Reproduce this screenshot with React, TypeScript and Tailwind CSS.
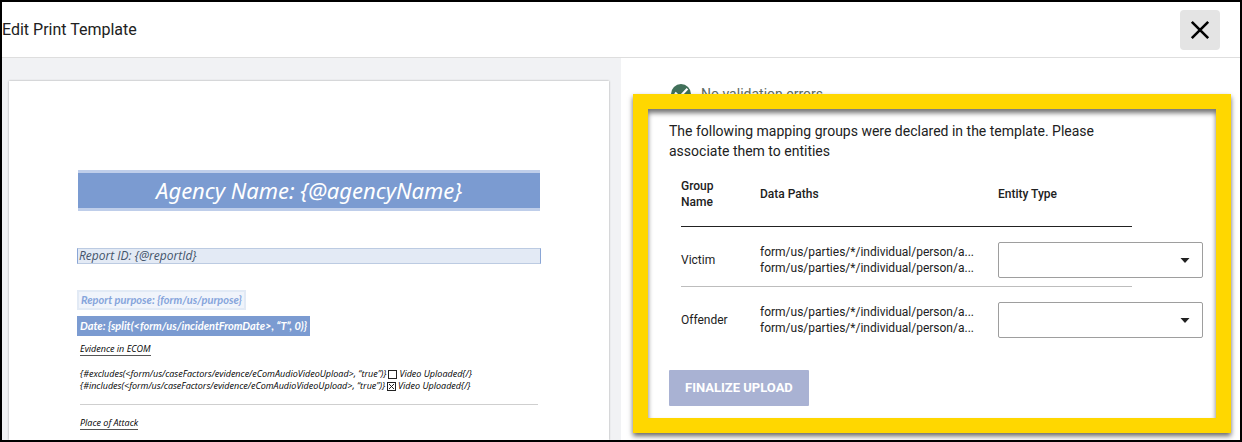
import React from "react";

type MappingGroup = {
  name: string;
  paths: string[];
};

const groups: MappingGroup[] = [
  {
    name: "Victim",
    paths: [
      "form/us/parties/*/individual/person/a...",
      "form/us/parties/*/individual/person/a...",
    ],
  },
  {
    name: "Offender",
    paths: [
      "form/us/parties/*/individual/person/a...",
      "form/us/parties/*/individual/person/a...",
    ],
  },
];

function Header() {
  return (
    <header className="flex items-center justify-between border-b border-[#dedede] pt-2 pr-5 pb-[7px]">
      <h1 className="text-base text-[#212121]">Edit Print Template</h1>
      <button
        type="button"
        aria-label="Close"
        className="flex size-10 items-center justify-center rounded bg-[#e4e4e4]"
      >
        <svg viewBox="0 0 20 20" className="size-5" fill="none" stroke="#000" strokeWidth="2.6">
          <path d="M1.8 1.8 18.2 18.2M18.2 1.8 1.8 18.2" />
        </svg>
      </button>
    </header>
  );
}

function TemplateCheckbox({ condition, checked }: { condition: string; checked: boolean }) {
  return (
    <label className="flex items-center whitespace-nowrap">
      <span>{condition}</span>
      <span className="relative mx-[2px] flex size-[9px]">
        <input
          type="checkbox"
          defaultChecked={checked}
          className="size-[9px] appearance-none border border-[#222] bg-white"
        />
        {checked && (
          <svg viewBox="0 0 9 9" className="pointer-events-none absolute inset-0 size-[9px]" stroke="#222">
            <path d="M2 2 7 7M7 2 2 7" />
          </svg>
        )}
      </span>
      <span>{"Video Uploaded{/}"}</span>
    </label>
  );
}

function TemplatePreview() {
  return (
    <section
      aria-label="Template preview"
      className="flex min-w-0 flex-col bg-[#f1f2f4] pt-[23px] pr-3 pl-[7px]"
    >
      <article className="flex-1 bg-white px-[69px] pt-[89px] font-['Open_Sans',sans-serif] text-black italic shadow-[0_0_2px_rgba(0,0,0,0.35)]">
        <h2 className="border-y-3 border-[#bfceea] bg-[#7b9bd1] text-center font-['Noto_Sans',sans-serif] text-[22px] leading-[35px] text-white">
          {"Agency Name: {@agencyName}"}
        </h2>
        <p className="-mx-px mt-[37px] border border-x-[#8aa6d6] border-y-[#bccbe2] bg-[#e3eaf5] px-px text-xs leading-[14px] font-medium text-[#44546a]">
          {"Report ID: {@reportId}"}
        </p>
        <p className="mt-[26px] -ml-px w-fit border-2 border-[#e2eaf5] bg-[#f0f4fb] px-[2px] font-['Lato',sans-serif] text-[11px] leading-4 font-bold text-[#86a5db]">
          {"Report purpose: {form/us/purpose}"}
        </p>
        <p className="mt-[6px] -ml-px w-fit bg-[#7b9bd1] px-[3px] font-['Lato',sans-serif] text-[11px] leading-5 font-bold text-white">
          {"Date: {split(<form/us/incidentFromDate>, “T”, 0)}"}
        </p>
        <div className="px-[2px] text-[9px] leading-3">
          <h3 className="mt-[7px] w-fit border-b border-[#555]">Evidence in ECOM</h3>
          <div className="mt-3">
            <TemplateCheckbox
              condition={"{#excludes(<form/us/caseFactors/evidence/eComAudioVideoUpload>, “true”)}"}
              checked={false}
            />
            <TemplateCheckbox
              condition={"{#includes(<form/us/caseFactors/evidence/eComAudioVideoUpload>, “true”)}"}
              checked
            />
          </div>
          <hr className="mt-3 border-[#cfcfcf]" />
          <h3 className="mt-3 w-fit border-b border-[#555]">Place of Attack</h3>
        </div>
      </article>
    </section>
  );
}

function EntitySelect({ label }: { label: string }) {
  return (
    <div className="relative w-[205px]">
      <select
        aria-label={label}
        defaultValue=""
        className="block h-9 w-full appearance-none rounded-xs border border-[#9e9e9e] bg-white pr-8 pl-3 text-xs"
      >
        <option value=""></option>
        <option>Person</option>
        <option>Organization</option>
      </select>
      <svg
        viewBox="0 0 10 5"
        className="pointer-events-none absolute top-4 right-[13px] h-[5px] w-[10px]"
        fill="#212121"
      >
        <path d="M0.5 0h9L5 5z" />
      </svg>
    </div>
  );
}

function MappingTable() {
  return (
    <table className="ml-3 w-[451px] table-fixed border-separate border-spacing-0 text-left text-xs leading-4">
      <thead>
        <tr>
          <th className="w-[79px] border-b border-[#212121] py-4 pr-8 font-medium">Group Name</th>
          <th className="w-[238px] border-b border-[#212121] font-medium">Data Paths</th>
          <th className="border-b border-[#212121] font-medium">Entity Type</th>
        </tr>
      </thead>
      <tbody className="[&>tr:first-child>td]:border-b">
        {groups.map((group) => (
          <tr key={group.name}>
            <td className="h-15 border-[#bdbdbd] pt-[6px]">{group.name}</td>
            <td className="h-15 border-[#bdbdbd] pt-[6px]">
              {group.paths.map((path, i) => (
                <div key={i} className="whitespace-nowrap">
                  {path}
                </div>
              ))}
            </td>
            <td className="h-15 border-[#bdbdbd] pt-[6px]">
              <EntitySelect label={`Entity type for ${group.name}`} />
            </td>
          </tr>
        ))}
      </tbody>
    </table>
  );
}

function MappingPanel() {
  return (
    <section aria-label="Validation and mapping" className="min-w-0 pt-[26px] pr-[9px] pb-[7px] pl-3">
      <div className="flex h-5 items-center gap-[10px] pl-[38px] text-sm leading-5 text-[#5c6a63]">
        <svg viewBox="0 0 20 20" className="size-5">
          <circle cx="10" cy="10" r="10" fill="#41705a" />
          <path d="M4 8.6 8.6 13 16.4 4.8" fill="none" stroke="#fff" strokeWidth="2.2" />
        </svg>
        <span>No validation errors</span>
      </div>
      <div className="relative -mt-[10px] border-[15px] border-[#ffd700] bg-white pt-3 pb-3 pl-[21px] shadow-[0_3px_5px_rgba(0,0,0,0.6),inset_0_4px_5px_rgba(0,0,0,0.55)]">
        <p className="mb-px max-w-[463px] text-sm leading-5">
          The following mapping groups were declared in the template. Please associate them to entities
        </p>
        <MappingTable />
        <button
          type="button"
          className="mt-[23px] block h-9 rounded-[1px] bg-[#a9b2d3] px-4 text-[13px] font-bold text-white"
        >
          FINALIZE UPLOAD
        </button>
      </div>
    </section>
  );
}

export default function App() {
  return (
    <main className="flex min-h-screen flex-col border-2 border-black bg-white font-['Roboto',sans-serif] text-[#212121]">
      <Header />
      <div className="grid flex-1 grid-cols-2">
        <TemplatePreview />
        <MappingPanel />
      </div>
    </main>
  );
}
